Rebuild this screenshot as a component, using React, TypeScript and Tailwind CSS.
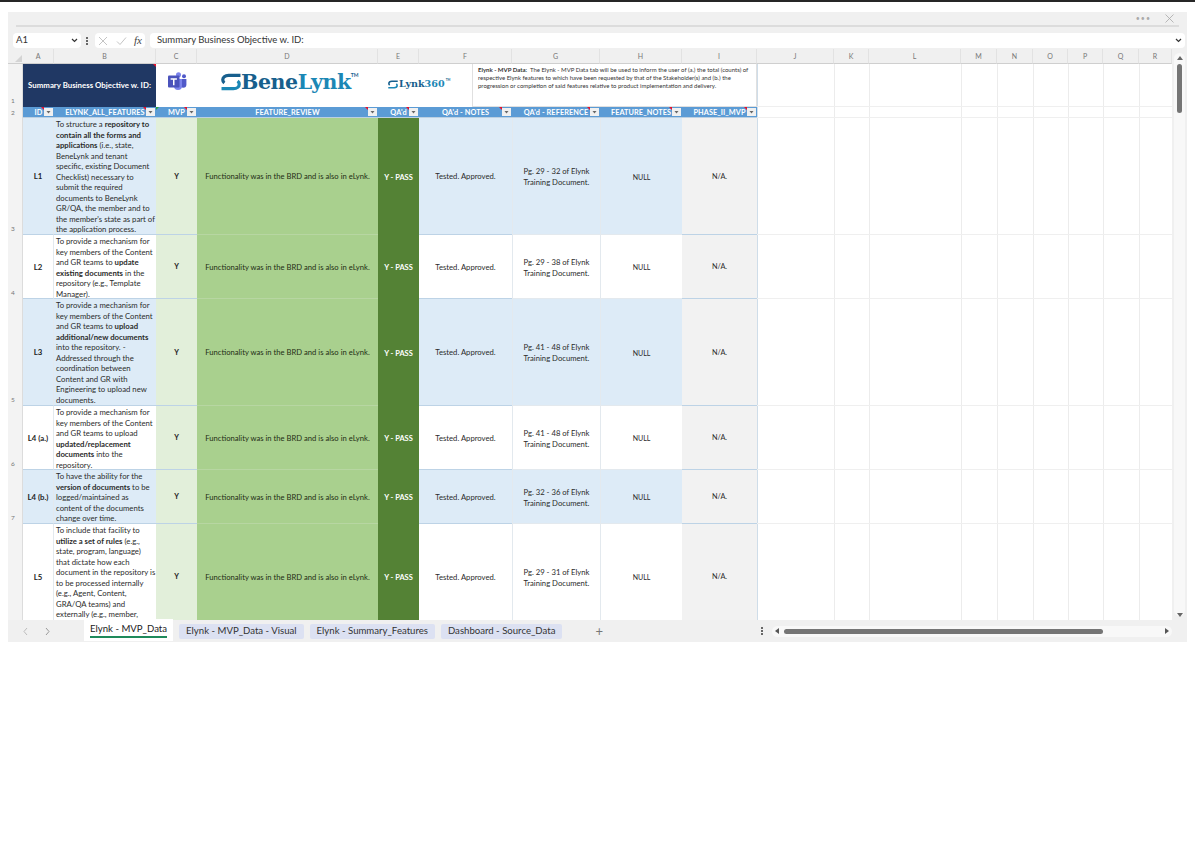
const colHeads = ["A", "B", "C", "D", "E", "F", "G", "H", "I", "J", "K", "L", "M", "N", "O", "P", "Q", "R"];

const filterHeads = [
  { label: "ID", className: "col-start-2" },
  { label: "ELYNK_ALL_FEATURES", className: "col-start-3" },
  { label: "MVP", className: "col-start-4", green: true },
  { label: "FEATURE_REVIEW", className: "col-start-5" },
  { label: "QA'd", className: "col-start-6" },
  { label: "QA'd - NOTES", className: "col-start-7" },
  { label: "QA'd - REFERENCE", className: "col-start-8" },
  { label: "FEATURE_NOTES", className: "col-start-9" },
  { label: "PHASE_II_MVP", className: "col-start-10" },
];

const rows = [
  {
    num: 3,
    id: "L1",
    shaded: true,
    ref: "Pg. 29 - 32 of Elynk",
    text: (
      <>
        To structure a <b>repository to contain all the forms and applications</b> (i.e., state, BeneLynk and tenant specific, existing Document Checklist) necessary to submit the required documents to BeneLynk GR/QA, the member and to the member's state as part of the application process.
      </>
    ),
  },
  {
    num: 4,
    id: "L2",
    shaded: false,
    ref: "Pg. 29 - 38 of Elynk",
    text: (
      <>
        To provide a mechanism for key members of the Content and GR teams to <b>update existing documents</b> in the repository (e.g., Template Manager).
      </>
    ),
  },
  {
    num: 5,
    id: "L3",
    shaded: true,
    ref: "Pg. 41 - 48 of Elynk",
    text: (
      <>
        To provide a mechanism for key members of the Content and GR teams to <b>upload additional/new documents</b> into the repository. - Addressed through the coordination between Content and GR with Engineering to upload new documents.
      </>
    ),
  },
  {
    num: 6,
    id: "L4 (a.)",
    shaded: false,
    ref: "Pg. 41 - 48 of Elynk",
    text: (
      <>
        To provide a mechanism for key members of the Content and GR teams to upload <b>updated/replacement documents</b> into the repository.
      </>
    ),
  },
  {
    num: 7,
    id: "L4 (b.)",
    shaded: true,
    ref: "Pg. 32 - 36 of Elynk",
    text: (
      <>
        To have the ability for the <b>version of documents</b> to be logged/maintained as content of the documents change over time.
      </>
    ),
  },
  {
    num: "",
    id: "L5",
    shaded: false,
    ref: "Pg. 29 - 31 of Elynk",
    text: (
      <>
        To include that facility to <b>utilize a set of rules</b> (e.g., state, program, language) that dictate how each document in the repository is to be processed internally (e.g., Agent, Content, GRA/QA teams) and externally (e.g., member,
      </>
    ),
  },
];

const ArrowDown = () => (
  <svg width="5" height="3" viewBox="0 0 5 3">
    <path d="M0.5 0h4L2.5 2.5z" fill="#666" />
  </svg>
);

const FilterCell = ({ label, className, green }: { label: string; className: string; green?: boolean }) => (
  <div className={`${className} row-start-3 relative bg-[#5b9bd5] flex items-center pt-[2px] text-white font-bold text-[7.3px] tracking-[0.1px] border-b border-[#bcd0e2]`}>
    <span className="flex-1 text-center whitespace-nowrap">{label}</span>
    {green && <span className="absolute left-0 top-0 w-0 h-0 border-t-[3px] border-r-[3px] border-t-[#2e9e3f] border-r-transparent" />}
    <span className="absolute right-[10px] top-0 w-0 h-0 border-t-[3px] border-l-[3px] border-t-[#e8102a] border-l-transparent" />
    <span className="absolute right-px top-px w-[9px] h-[8px] bg-[#f0f0f0] flex items-center justify-center">
      <ArrowDown />
    </span>
  </div>
);

const SheetRow = ({ row, index }: { row: (typeof rows)[number]; index: number }) => {
  const tint = row.shaded ? "bg-[#ddebf7]" : "bg-white";
  const rowStart = ["row-start-4", "row-start-5", "row-start-6", "row-start-7", "row-start-8", "row-start-9"][index];
  const line = "border-b border-[#bdd3e6]";
  return (
    <>
      <div className={`${rowStart} col-start-1 bg-[#f3f3f3] text-[#777] text-[6.5px] flex items-end pb-px pl-[3px] pr-1 border-r border-[#dcdcdc]`}>
        {row.num}
      </div>
      <div className={`${rowStart} col-start-2 ${tint} ${line} border-r border-r-[#e3e9ee] pt-[2px] flex items-center justify-center font-bold text-[7.8px] text-[#222]`}>
        {row.id}
      </div>
      <div className={`${rowStart} col-start-3 ${tint} ${line} pl-[2px] pt-px text-[7.75px] leading-[10.5px] text-[#2b2b2b]`}>
        {row.text}
      </div>
      <div className={`${rowStart} col-start-4 bg-[#e2efda] ${line} pt-[2px] flex items-center justify-center font-bold text-[7.2px] text-[#222]`}>
        Y
      </div>
      <div className={`${rowStart} col-start-5 bg-[#a9d08e] pt-[2px] flex items-center justify-center text-[7.65px] text-[#1f2d14] border-b border-[#b7d6a2]`}>
        Functionality was in the BRD and is also in eLynk.
      </div>
      <div className={`${rowStart} col-start-6 bg-[#548235] pt-[2px] flex items-center justify-center font-bold text-[7.5px] text-white`}>
        Y - PASS
      </div>
      <div className={`${rowStart} col-start-7 ${tint} ${line} pt-[2px] flex items-center justify-center text-[7.7px] text-[#2b2b2b]`}>
        Tested. Approved.
      </div>
      <div className={`${rowStart} col-start-8 ${tint} ${line} border-l border-[#e3e9ee] pt-[2px] flex flex-col items-center justify-center text-[7.7px] leading-[10.6px] text-[#2b2b2b]`}>
        <span>{row.ref}</span>
        <span>Training Document.</span>
      </div>
      <div className={`${rowStart} col-start-9 ${tint} ${line} border-l border-[#e3e9ee] pt-[2px] flex items-center justify-center text-[7px] text-[#2b2b2b]`}>
        NULL
      </div>
      <div className={`${rowStart} col-start-10 bg-[#f2f2f2] ${line} pt-[2px] flex items-center justify-center text-[7.3px] text-[#2b2b2b]`}>
        N/A.
      </div>
    </>
  );
};

const BlankColumns = () => (
  <div className="col-start-11 col-end-20 row-start-2 row-end-10 grid grid-cols-[77px_35px_92px_36px_36px_35px_35px_36px_33px] border-l border-[#cfdde9]">
    {[0, 1, 2, 3, 4, 5, 6, 7, 8].map((i) => (
      <div key={i} className="border-r border-[#ececec]" />
    ))}
  </div>
);

const HorizontalRules = () => (
  <div className="col-start-11 col-end-20 row-start-2 row-end-10 grid grid-rows-[43px_11px_117px_64px_107px_64px_54px_106px]">
    {[0, 1, 2, 3, 4, 5, 6, 7].map((i) => (
      <div key={i} className="border-b border-[#efefef]" />
    ))}
  </div>
);

const SlashMark = ({ className }: { className: string }) => (
  <svg viewBox="0 0 21 19" className={className} fill="none" strokeWidth="3.4">
    <path d="M20.5 2.5H8C4 2.5 1.8 4.6 1.8 7.2c0 1.5.7 2.6 1.7 3.4" stroke="#175f8d" />
    <path d="M.5 16.5H13c4 0 6.2-2.1 6.2-4.7 0-1.5-.7-2.6-1.7-3.4" stroke="#1b87b5" />
  </svg>
);

const TeamsLogo = () => (
  <svg width="19" height="18" viewBox="0 0 19 18">
    <circle cx="10.5" cy="2.8" r="2.5" fill="#7b83eb" />
    <circle cx="16" cy="4.2" r="2" fill="#5059c9" />
    <path d="M12 7h6.4v5.5a3.2 3.2 0 0 1-6.4 0z" fill="#5059c9" />
    <path d="M6 7h8v7a4 4 0 0 1-8 0z" fill="#7b83eb" />
    <rect x="0" y="3.5" width="11.5" height="12" rx="1" fill="#4b53bc" />
    <path d="M2.6 6.2h6.3v1.5H6.5v5.5H5V7.7H2.6z" fill="#fff" />
  </svg>
);

const TabButton = ({ label }: { label: string }) => (
  <div className="h-[15px] px-[7px] rounded-[2px] bg-[#dce1f2] flex items-center text-[9.6px] text-[#333] whitespace-nowrap">
    {label}
  </div>
);

export default function App() {
  return (
    <div className="w-[1195px] h-[859px] bg-white overflow-hidden font-['Lato','Open_Sans',sans-serif]">
      <div className="h-[2px] bg-[#262626]" />
      <div className="h-[10px]" />

      <div className="w-[1179px] h-[630px] ml-2 bg-[#f0f0f0] flex flex-col">
        {/* title strip */}
        <div className="h-[15px] shrink-0 flex items-center justify-end gap-[14px] pr-[8px] border-b-2 border-[#dcdcdc] mr-2 ml-2">
          <span className="text-[#aaa] text-[7px] tracking-[1px] leading-none">•••</span>
          <svg width="9" height="9" viewBox="0 0 9 9" className="mr-[-3px]">
            <path d="M0.5 0.5l8 8M8.5 0.5l-8 8" stroke="#a8a8a8" strokeWidth="0.8" />
          </svg>
        </div>

        {/* formula bar */}
        <div className="h-[22px] shrink-0 flex items-start px-[5px] pt-[6px] gap-[3px]">
          <div className="w-[68px] h-[15px] bg-white rounded-sm flex items-center justify-between px-[3px] text-[9.5px] text-[#333]">
            <span>A1</span>
            <svg width="7" height="5" viewBox="0 0 7 5">
              <path d="M1 1l2.5 2.5L6 1" stroke="#333" strokeWidth="1.2" fill="none" />
            </svg>
          </div>
          <div className="w-[6px] h-[15px] flex flex-col items-center justify-center gap-px">
            <span className="w-[2px] h-[2px] bg-[#666]" />
            <span className="w-[2px] h-[2px] bg-[#666]" />
            <span className="w-[2px] h-[2px] bg-[#666]" />
          </div>
          <div className="w-[50px] h-[15px] bg-white rounded-sm flex items-center justify-between px-[3px] ml-[2px]">
            <svg width="10" height="10" viewBox="0 0 10 10">
              <path d="M1 1l8 8M9 1l-8 8" stroke="#c4c4c4" strokeWidth="1" />
            </svg>
            <svg width="11" height="10" viewBox="0 0 11 10">
              <path d="M1 5.5l3 3L10 1.5" stroke="#c4c4c4" strokeWidth="1" fill="none" />
            </svg>
            <span className="font-['Liberation_Serif',serif] italic text-[11px] leading-none text-[#444]">fx</span>
          </div>
          <div className="flex-1 h-[15px] bg-white rounded-sm flex items-center justify-between pl-[7px] pr-[3px] ml-[2px] mr-[-3px] text-[9.5px] text-[#333]">
            <span>Summary Business Objective w. ID:</span>
            <svg width="7" height="5" viewBox="0 0 7 5">
              <path d="M1 1l2.5 2.5L6 1" stroke="#333" strokeWidth="1.2" fill="none" />
            </svg>
          </div>
        </div>

        {/* sheet + vertical scrollbar */}
        <div className="flex h-[571px] shrink-0">
          <div className="w-[1164px] h-[571px] overflow-hidden bg-white grid grid-cols-[15px_31px_102px_41px_181px_41px_93px_88px_82px_75px_77px_35px_92px_36px_36px_35px_35px_36px_33px] grid-rows-[15px_43px_11px_117px_64px_107px_64px_54px_106px]">
            {/* column letters */}
            <div className="col-start-1 row-start-1 bg-[#f0f0f0] border-b border-[#cfcfcf] flex items-end justify-end">
              <span className="w-0 h-0 border-b-[7px] border-l-[7px] border-b-[#d4d4d4] border-l-transparent mb-px mr-px" />
            </div>
            {colHeads.map((label) => (
              <div key={label} className="row-start-1 bg-[#f0f0f0] border-b border-[#cfcfcf] border-r border-r-[#e2e2e2] flex items-center justify-center text-[7px] text-[#777]">
                {label}
              </div>
            ))}

            {/* row numbers 1, 2 */}
            <div className="col-start-1 row-start-2 bg-[#f3f3f3] text-[#777] text-[6.5px] flex items-end pb-px pl-[3px] border-r border-[#dcdcdc]">1</div>
            <div className="col-start-1 row-start-3 bg-[#f3f3f3] text-[#777] text-[6.5px] flex items-center pl-[3px] border-r border-[#dcdcdc]">2</div>

            <BlankColumns />
            <HorizontalRules />

            {/* banner row */}
            <div className="col-start-2 col-end-4 row-start-2 relative bg-[#203864] flex items-center justify-center font-bold text-[7.85px] text-white">
              Summary Business Objective w. ID:
              <span className="absolute right-0 top-0 w-0 h-0 border-t-[3px] border-l-[3px] border-t-[#e8102a] border-l-transparent" />
            </div>
            <div className="col-start-4 row-start-2 bg-white flex items-start justify-center pt-[8px] pl-[2px]">
              <TeamsLogo />
            </div>
            <div className="col-start-5 row-start-2 bg-white flex items-start pt-[6px] pl-[24px]">
              <SlashMark className="w-[20px] h-[18px] mt-[3px] shrink-0" />
              <span className="font-['DejaVu_Serif',serif] font-bold text-[20.5px] leading-[24px] text-[#175f8d] tracking-[-0.4px]">
                Bene<span className="text-[#1b87b5]">Lynk</span>
              </span>
              <span className="text-[5px] font-bold leading-none text-[#175f8d] mt-[3px]">TM</span>
            </div>
            <div className="col-start-6 col-end-8 row-start-2 bg-white flex items-start gap-px pt-[13px] pl-[10px] whitespace-nowrap">
              <SlashMark className="w-[10px] h-[9px] mt-[2.5px] shrink-0" />
              <span className="font-['DejaVu_Serif',serif] font-bold text-[9.6px] leading-[13px] text-[#175f8d]">
                Lynk<span className="text-[#1b87b5]">360</span>
              </span>
              <span className="text-[3px] font-bold leading-none text-[#175f8d] mt-[2px]">TM</span>
            </div>
            <div className="col-start-7 col-end-11 row-start-2 bg-white pl-[5px] pr-[6px] pt-[1.5px] ml-[53px] border-l border-r border-b border-[#e0e0e0] text-[6px] leading-[8.1px] text-[#333]">
              <b>Elynk - MVP Data:</b>&nbsp; The Elynk - MVP Data tab will be used to inform the user of (a.) the total (counts) of respective Elynk features to which have been requested by that of the Stakeholder(s) and (b.) the progression or completion of said features relative to product implementation and delivery.
            </div>

            {/* filter header row */}
            {filterHeads.map((h) => (
              <FilterCell key={h.label} label={h.label} className={h.className} green={h.green} />
            ))}

            {rows.map((row, i) => (
              <SheetRow key={row.id} row={row} index={i} />
            ))}
          </div>

          {/* vertical scrollbar */}
          <div className="w-[15px] flex flex-col items-center pt-[7px] relative">
            <div className="absolute inset-y-[4px] left-[2px] w-[11px] rounded-md bg-[#f8f8f8]" />
            <span className="relative w-0 h-0 border-x-[3.5px] border-x-transparent border-b-[4px] border-b-[#666]" />
            <div className="relative w-[5px] h-[49px] mt-[4px] rounded-full bg-[#757575]" />
            <span className="absolute bottom-[3px] w-0 h-0 border-x-[3.5px] border-x-transparent border-t-[4px] border-t-[#666]" />
          </div>
        </div>

        {/* sheet tabs */}
        <div className="flex-1 flex items-center pl-[14px] pr-[15px]">
          <svg width="30" height="9" viewBox="0 0 30 9" className="mr-[32px] shrink-0">
            <path d="M5 1L2 4.5 5 8" stroke="#b5b5b5" strokeWidth="0.9" fill="none" />
            <path d="M24 1l3 3.5L24 8" stroke="#8e8e8e" strokeWidth="0.9" fill="none" />
          </svg>
          <div className="h-[22px] -mt-[2px] px-[6px] bg-white flex flex-col items-stretch justify-center text-[9.6px] text-[#222] whitespace-nowrap">
            <span className="leading-[13px]">Elynk - MVP_Data</span>
            <span className="h-[1.5px] bg-[#1f8a5b] mt-px" />
          </div>
          <div className="flex items-center gap-[6px] ml-[6px]">
            <TabButton label="Elynk - MVP_Data - Visual" />
            <TabButton label="Elynk - Summary_Features" />
            <TabButton label="Dashboard - Source_Data" />
          </div>
          <span className="ml-[33px] text-[#777] text-[13px] leading-none">+</span>
          <div className="ml-auto flex flex-col gap-px">
            <span className="w-[2px] h-[2px] bg-[#666]" />
            <span className="w-[2px] h-[2px] bg-[#666]" />
            <span className="w-[2px] h-[2px] bg-[#666]" />
          </div>
          <div className="ml-[9px] w-[400px] h-[11px] rounded-md bg-[#f8f8f8] flex items-center gap-[5px] px-[3px]">
            <span className="w-0 h-0 border-y-[3px] border-y-transparent border-r-[4px] border-r-[#555]" />
            <div className="w-[319px] h-[5px] rounded-full bg-[#757575]" />
            <span className="ml-auto w-0 h-0 border-y-[3px] border-y-transparent border-l-[4px] border-l-[#555]" />
          </div>
        </div>
      </div>
    </div>
  );
}
